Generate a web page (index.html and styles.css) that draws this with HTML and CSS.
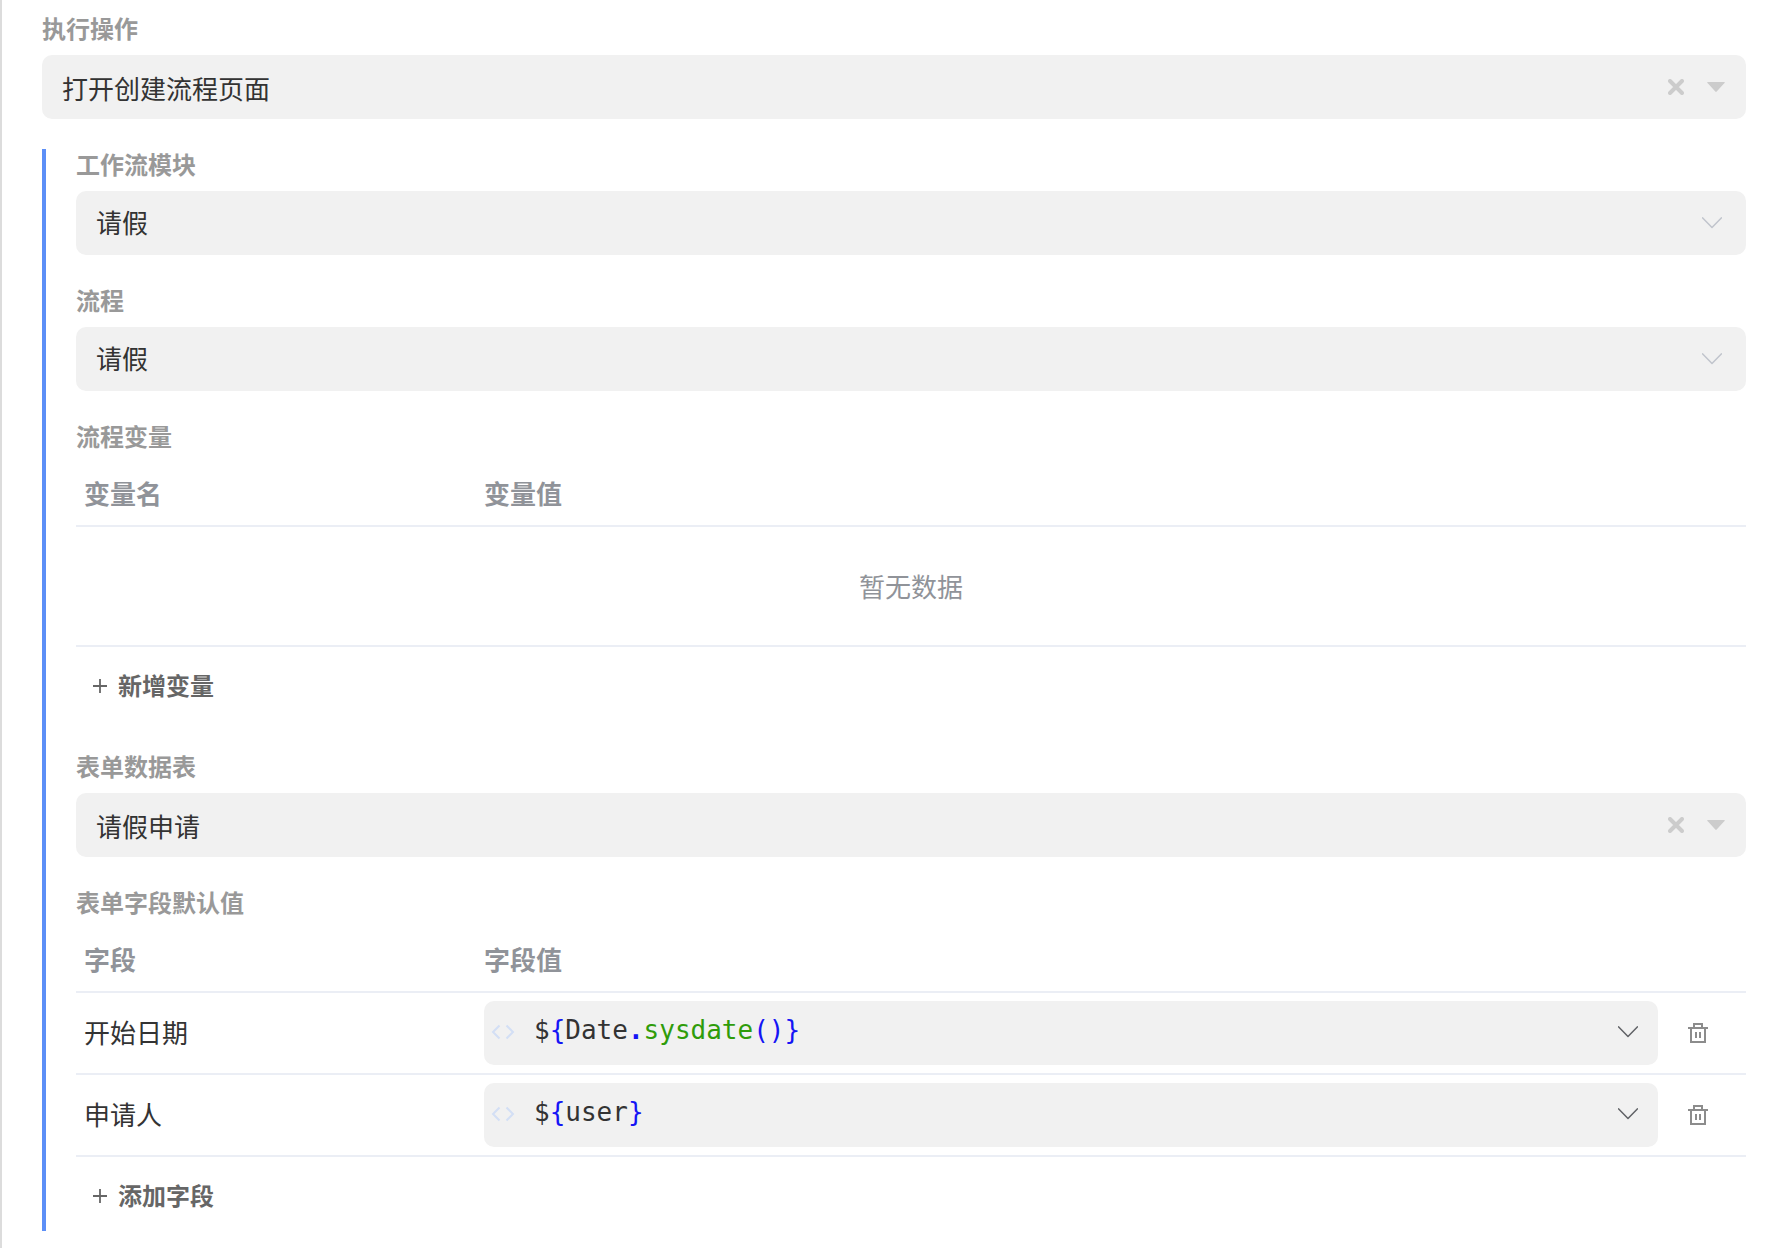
FILE: index.html
```html
<!DOCTYPE html>
<html lang="zh-CN">
<head>
<meta charset="utf-8">
<title>执行操作</title>
<link rel="stylesheet" href="styles.css">
</head>
<body>
<svg class="sprite" aria-hidden="true">
  <symbol id="clear" viewBox="0 0 16 16"><path d="M2 2L14 14M14 2L2 14" fill="none" stroke="currentColor" stroke-width="4" stroke-linecap="round"/></symbol>
  <symbol id="caret" viewBox="0 0 18 10"><path d="M1 0H17Q18.5 0 17.500 1L9.700 9.500Q9 10.300 8.300 9.500L.5 1Q-.5 0 1 0Z" fill="currentColor"/></symbol>
  <symbol id="chevron" viewBox="0 0 20 12"><path d="M.7 .9L10 10.400L19.300 .9" fill="none" stroke="currentColor" stroke-width="1.500" stroke-linecap="round" stroke-linejoin="round"/></symbol>
  <symbol id="plus" viewBox="0 0 14 14"><path d="M7 0V14M0 7H14" fill="none" stroke="currentColor" stroke-width="1.800"/></symbol>
  <symbol id="code" viewBox="0 0 24 16"><path d="M8.500 1.500L2 8L8.500 14.500M15.500 1.500L22 8L15.500 14.500" fill="none" stroke="currentColor" stroke-width="2"/></symbol>
  <symbol id="trash" viewBox="0 0 20 20"><path d="M0 5H20M6 5V1H14V5M3 5V19H17V5M8 9V15M12 9V15" fill="none" stroke="currentColor" stroke-width="2"/></symbol>
</svg>
<main class="panel">
  <div class="field">
    <label class="label" for="action">执行操作</label>
    <div class="control control-search">
      <select id="action" class="select"><option>打开创建流程页面</option></select>
      <button class="clear" type="button" aria-label="清除"><svg class="icon-clear"><use href="#clear"/></svg></button>
      <svg class="icon-caret" aria-hidden="true"><use href="#caret"/></svg>
    </div>
  </div>

  <div class="group">
    <div class="field">
      <label class="label" for="module">工作流模块</label>
      <div class="control">
        <select id="module" class="select"><option>请假</option></select>
        <svg class="icon-chevron" aria-hidden="true"><use href="#chevron"/></svg>
      </div>
    </div>
    <div class="field">
      <label class="label" for="process">流程</label>
      <div class="control">
        <select id="process" class="select"><option>请假</option></select>
        <svg class="icon-chevron" aria-hidden="true"><use href="#chevron"/></svg>
      </div>
    </div>
    <section class="field">
      <h2 class="label" id="vars">流程变量</h2>
      <table class="table" aria-labelledby="vars">
        <thead><tr><th class="col-name">变量名</th><th>变量值</th><th class="col-tools"></th></tr></thead>
        <tbody><tr><td class="empty" colspan="3">暂无数据</td></tr></tbody>
      </table>
      <button class="add" type="button"><svg class="icon-plus"><use href="#plus"/></svg>新增变量</button>
    </section>
    <div class="field">
      <label class="label" for="form">表单数据表</label>
      <div class="control control-search">
        <select id="form" class="select"><option>请假申请</option></select>
        <button class="clear" type="button" aria-label="清除"><svg class="icon-clear"><use href="#clear"/></svg></button>
        <svg class="icon-caret" aria-hidden="true"><use href="#caret"/></svg>
      </div>
    </div>
    <section class="field">
      <h2 class="label" id="defaults">表单字段默认值</h2>
      <table class="table" aria-labelledby="defaults">
        <thead><tr><th class="col-name">字段</th><th>字段值</th><th class="col-tools"></th></tr></thead>
        <tbody>
          <tr>
            <td class="name">开始日期</td>
            <td>
              <div class="control control-code">
                <svg class="icon-code" aria-hidden="true"><use href="#code"/></svg>
                <div class="code" role="textbox" contenteditable="true" spellcheck="false" aria-label="开始日期">$<span class="bracket">{</span>Date<span class="operator">.</span><span class="method">sysdate</span><span class="bracket">()}</span></div>
                <button class="open" type="button" aria-label="展开"><svg class="icon-chevron"><use href="#chevron"/></svg></button>
              </div>
            </td>
            <td><button class="remove" type="button" aria-label="删除"><svg class="icon-trash"><use href="#trash"/></svg></button></td>
          </tr>
          <tr>
            <td class="name">申请人</td>
            <td>
              <div class="control control-code">
                <svg class="icon-code" aria-hidden="true"><use href="#code"/></svg>
                <div class="code" role="textbox" contenteditable="true" spellcheck="false" aria-label="申请人">$<span class="bracket">{</span>user<span class="bracket">}</span></div>
                <button class="open" type="button" aria-label="展开"><svg class="icon-chevron"><use href="#chevron"/></svg></button>
              </div>
            </td>
            <td><button class="remove" type="button" aria-label="删除"><svg class="icon-trash"><use href="#trash"/></svg></button></td>
          </tr>
        </tbody>
      </table>
      <button class="add" type="button"><svg class="icon-plus"><use href="#plus"/></svg>添加字段</button>
    </section>
  </div>
</main>
</body>
</html>
```
FILE: styles.css
```css
* { box-sizing: border-box; }

body {
  margin: 0;
  background: #fff;
  color: #333;
  font: 26px/32px "Noto Sans CJK SC", sans-serif;
}

button, select { margin: 0; padding: 0; border: 0; background: none; color: inherit; font: inherit; }
button { display: flex; align-items: center; justify-content: center; cursor: pointer; }
svg { display: block; flex: none; }
.sprite { display: none; }

.panel {
  display: flex;
  flex-direction: column;
  gap: 30px;
  min-height: 100vh;
  padding: 13px 30px 17px 40px;
  border-left: 2px solid #dcdcdc;
}

.group {
  display: flex;
  flex-direction: column;
  gap: 30px;
  padding-left: 30px;
  border-left: 4px solid #5c8ff7;
}

.label {
  display: block;
  margin: 0 0 12px;
  color: #999;
  font-size: 24px;
  font-weight: 700;
  line-height: 30px;
}

.control {
  display: flex;
  align-items: center;
  height: 64px;
  padding-right: 24px;
  border-radius: 10px;
  background: #f1f1f1;
  color: #c0c4cc;
}
.select {
  flex: 1;
  min-width: 0;
  height: 64px;
  padding: 0 0 2px 20px;
  appearance: none;
  color: #333;
}
.control-search { padding-right: 21px; color: #ccc; }
.control-search .select { padding: 2px 0 0 20px; }
.clear { width: 32px; height: 32px; margin-right: 15px; }

.icon-clear { width: 16px; height: 16px; }
.icon-caret { width: 18px; height: 10px; }
.icon-chevron { width: 20px; height: 12px; }
.icon-plus { width: 14px; height: 14px; }
.icon-code { width: 24px; height: 16px; }
.icon-trash { width: 20px; height: 20px; }

.table { width: 100%; border-collapse: separate; border-spacing: 0; table-layout: fixed; }
.table th, .table td { padding: 8px; border-bottom: 2px solid #ebeef5; text-align: left; }
.table th { height: 64px; padding-bottom: 10px; color: #909399; font-weight: 700; }
.table .name { padding-bottom: 10px; }
.table .col-name { width: 400px; }
.table .col-tools { width: 80px; }
.table .empty { height: 120px; color: #909399; text-align: center; }

.control-code { padding: 0 20px 2px 7px; }
.code {
  flex: 1;
  min-width: 0;
  padding: 0 20px 4px 19px;
  color: #333;
  font-family: "DejaVu Sans Mono", monospace;
}
.bracket { color: #1414f5; }
.operator { color: #1414f5; font-weight: 700; }
.method { color: #2f9c0a; }
.icon-code { color: #d3dff5; }
.open { color: #606266; }
.remove { width: 48px; height: 48px; color: #8c8c8c; }

.add {
  gap: 11px;
  height: 48px;
  margin: 15px 0 11px;
  padding: 0 17px 2px;
  color: #666;
  font-size: 24px;
  font-weight: 700;
}
.add svg { margin-top: 2px; }
```
